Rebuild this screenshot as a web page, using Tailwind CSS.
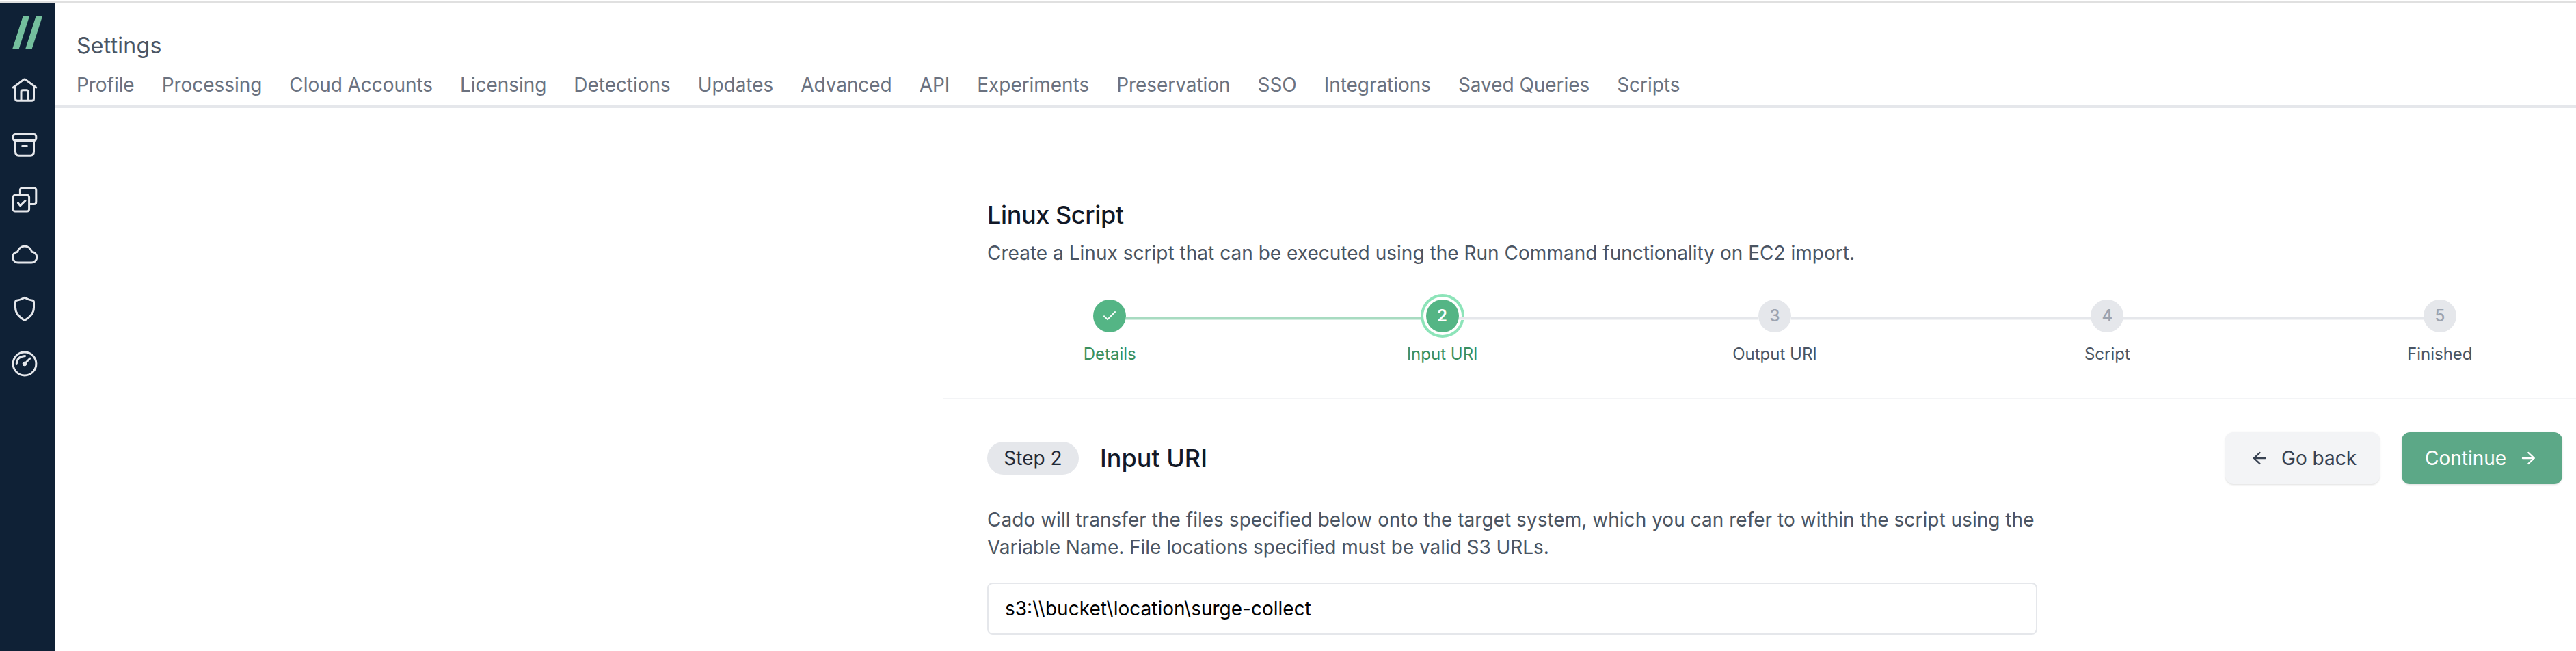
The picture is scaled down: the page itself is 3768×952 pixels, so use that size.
<!DOCTYPE html>
<html lang="en">
<head>
<meta charset="utf-8">
<title>Settings</title>
<script src="https://cdn.jsdelivr.net/npm/@tailwindcss/browser@4"></script>
</head>
<body class="bg-white font-['Inter',sans-serif]">
<div class="flex h-[952px] w-[3768px] flex-col overflow-hidden pt-[2px]">
  <div class="h-[2px] shrink-0 bg-[#e0e0e0]"></div>
  <div class="flex min-h-0 flex-1">
    <aside class="flex w-20 shrink-0 flex-col bg-[#0f2136] pt-5 pl-4 text-[#e5e7eb]">
      <svg class="h-12 w-12" viewBox="0 0 48 48" fill="#74bf9d"><path d="M17.500 0h9.500L11.500 48H2zM36.500 0h9.500L30.500 48H21z"/></svg>
      <nav class="mt-10 flex flex-col gap-10">
        <svg class="h-10 w-10" viewBox="0 0 40 40" fill="none" stroke="currentColor" stroke-width="3" stroke-linecap="round" stroke-linejoin="round"><path d="M3.300 16L18.400 4.600Q20 3.400 21.600 4.600L36.700 16M6.500 14.500v17.700q0 3 3 3h21q3 0 3-3V14.500M15 35V22q0-2.200 2.200-2.200h5.600Q25 19.800 25 22v13"/></svg>
        <svg class="h-10 w-10" viewBox="0 0 40 40" fill="none" stroke="currentColor" stroke-width="3" stroke-linecap="round" stroke-linejoin="round"><rect x="3.200" y="4.500" width="33.600" height="9" rx="3"/><path d="M6.500 14v16q0 5.200 5.200 5.200h16.600q5.200 0 5.200-5.200V14M16.500 21.600h7"/></svg>
        <svg class="h-10 w-10" viewBox="0 0 40 40" fill="none" stroke="currentColor" stroke-width="3" stroke-linecap="round" stroke-linejoin="round"><rect x="3.200" y="13.300" width="23.400" height="23.800" rx="3"/><path d="M13.400 12.500V6q0-3 3-3h17.400q3 0 3 3v17.400q0 3-3 3h-6M10.500 25l3.200 3.700 7.300-7.200"/></svg>
        <svg class="h-10 w-10" viewBox="0 0 40 40" fill="none" stroke="currentColor" stroke-width="3" stroke-linecap="round" stroke-linejoin="round"><path d="M11 32h18.500a7.600 7.600 0 0 0 1-15.800A10.700 10.700 0 0 0 9.700 16.200A7.900 7.900 0 0 0 11 32z"/></svg>
        <svg class="h-10 w-10" viewBox="0 0 40 40" fill="none" stroke="currentColor" stroke-width="3" stroke-linecap="round" stroke-linejoin="round"><path d="M20 3.300c3.500 2 7.500 3.500 11.500 4q2 .5 2 2.500v8c0 8-5.500 14-13.500 18.700C12 31.800 6.500 25.800 6.500 17.800v-8q0-2 2-2.500c4-.5 8-2 11.500-4z"/></svg>
        <svg class="h-10 w-10" viewBox="0 0 40 40" fill="none" stroke="currentColor" stroke-width="3" stroke-linecap="round" stroke-linejoin="round"><circle cx="20" cy="20" r="16.900"/><circle cx="20" cy="20" r="2.900" fill="currentColor" stroke-width="1"/><path d="M20 20l8-8M8.200 20.500Q8.500 9.300 20.500 8.500"/></svg>
      </nav>
    </aside>

    <main class="flex min-w-0 flex-1 flex-col">
      <header class="flex h-[154px] shrink-0 flex-col border-b-4 border-[#e5e7eb] pt-[39px] pl-8">
        <h1 class="text-[32px] leading-[48px] tracking-[0.25px] text-[#4b5563]">Settings</h1>
        <nav class="mt-[13px] flex gap-10 text-[28px] leading-10 tracking-[-0.05px] whitespace-nowrap text-[#6b7280]">
          <a>Profile</a><a>Processing</a><a>Cloud Accounts</a><a>Licensing</a><a>Detections</a><a>Updates</a><a>Advanced</a><a>API</a><a>Experiments</a><a>Preservation</a><a>SSO</a><a>Integrations</a><a>Saved Queries</a><a>Scripts</a>
        </nav>
      </header>

      <section class="ml-[1300px] flex w-[2432px] flex-col pt-32">
        <div class="pl-16">
          <h2 class="text-[36px] leading-[56px] font-medium tracking-[-0.4px] text-[#111827]">Linux Script</h2>
          <p class="mt-2 text-[28px] leading-10 tracking-[0.02px] text-[#4b5563]">Create a Linux script that can be executed using the Run Command functionality on EC2 import.</p>
        </div>

        <ol class="mt-12 grid grid-cols-5 text-center text-[24px] leading-8 text-[#4b5563]">
          <li class="flex flex-col items-center">
            <div class="flex w-full items-center">
              <div class="flex-1"></div>
              <div class="flex size-12 items-center justify-center rounded-full bg-[#54b585]"><svg class="size-6" viewBox="0 0 24 24" fill="none" stroke="#fff" stroke-width="2" stroke-linecap="round" stroke-linejoin="round"><path d="M4 12.300l5 4.800L20 6"/></svg></div>
              <div class="mt-[7px] h-[5px] flex-1 border-y border-[#d3ede0] bg-[#a8dbc1]"></div>
            </div>
            <span class="mt-4 text-[#38905f]">Details</span>
          </li>
          <li class="flex flex-col items-center">
            <div class="flex w-full items-center">
              <div class="mt-[7px] h-[5px] flex-1 border-y border-[#d3ede0] bg-[#a8dbc1]"></div>
              <div class="flex size-12 items-center justify-center rounded-full bg-[#54b585] font-semibold text-white ring-4 ring-[#8de4b9] ring-offset-4 ring-offset-white">2</div>
              <div class="mt-[7px] h-[5px] flex-1 border-y border-[#f2f3f5] bg-[#e5e7eb]"></div>
            </div>
            <span class="mt-4 text-[#38905f]">Input URI</span>
          </li>
          <li class="flex flex-col items-center">
            <div class="flex w-full items-center">
              <div class="mt-[7px] h-[5px] flex-1 border-y border-[#f2f3f5] bg-[#e5e7eb]"></div>
              <div class="flex size-12 items-center justify-center rounded-full bg-[#e5e7eb] font-medium text-[#9ca3af]">3</div>
              <div class="mt-[7px] h-[5px] flex-1 border-y border-[#f2f3f5] bg-[#e5e7eb]"></div>
            </div>
            <span class="mt-4">Output URI</span>
          </li>
          <li class="flex flex-col items-center">
            <div class="flex w-full items-center">
              <div class="mt-[7px] h-[5px] flex-1 border-y border-[#f2f3f5] bg-[#e5e7eb]"></div>
              <div class="flex size-12 items-center justify-center rounded-full bg-[#e5e7eb] font-medium text-[#9ca3af]">4</div>
              <div class="mt-[7px] h-[5px] flex-1 border-y border-[#f2f3f5] bg-[#e5e7eb]"></div>
            </div>
            <span class="mt-4">Script</span>
          </li>
          <li class="flex flex-col items-center">
            <div class="flex w-full items-center">
              <div class="mt-[7px] h-[5px] flex-1 border-y border-[#f2f3f5] bg-[#e5e7eb]"></div>
              <div class="flex size-12 items-center justify-center rounded-full bg-[#e5e7eb] font-medium text-[#9ca3af]">5</div>
              <div class="flex-1"></div>
            </div>
            <span class="mt-4">Finished</span>
          </li>
        </ol>

        <hr class="mt-12 border-t-2 border-[#f3f4f6]">

        <div class="mt-12 flex h-[76px] items-center px-16">
          <span class="flex h-12 w-[134px] items-center justify-center rounded-full bg-[#e5e7eb] text-[28px] leading-10 text-[#1f2937]">Step 2</span>
          <h3 class="ml-[31px] text-[36px] leading-[56px] font-medium text-[#111827]">Input URI</h3>
          <button class="ml-auto flex h-[76px] w-[226px] items-center rounded-xl bg-[#f3f4f6] pl-8 text-[28px] text-[#374151] shadow-sm">
            <svg class="h-9 w-9" viewBox="0 0 36 36" fill="none" stroke="currentColor" stroke-width="2.400" stroke-linecap="round" stroke-linejoin="round"><path d="M26.300 18H10M18.500 10L10 18l8.500 8"/></svg>
            <span class="ml-[14px]">Go back</span>
          </button>
          <button class="ml-8 flex h-[76px] w-[235px] items-center rounded-xl bg-[#5ca887] pl-[34px] text-[28px] text-white shadow-sm">
            <span>Continue</span>
            <svg class="ml-[15px] h-9 w-9" viewBox="0 0 36 36" fill="none" stroke="currentColor" stroke-width="2.400" stroke-linecap="round" stroke-linejoin="round"><path d="M9 18h16.500M17.300 10l8.500 8-8.500 8"/></svg>
          </button>
        </div>

        <div class="mt-8 w-[1600px] pl-16">
          <p class="text-[28px] leading-10 text-[#4b5563]"><span class="tracking-[0.03px]">Cado will transfer the files specified below onto the target system, which you can refer to within the script using the</span> <span class="tracking-[-0.05px]">Variable Name. File locations specified must be valid S3 URLs.</span></p>
          <div class="mt-8 flex h-[76px] items-center rounded-lg border-2 border-[#e5e7eb] px-6 text-[28px] text-black">s3:\\bucket\location\surge-collect</div>
        </div>
      </section>
    </main>
  </div>
</div>
</body>
</html>
